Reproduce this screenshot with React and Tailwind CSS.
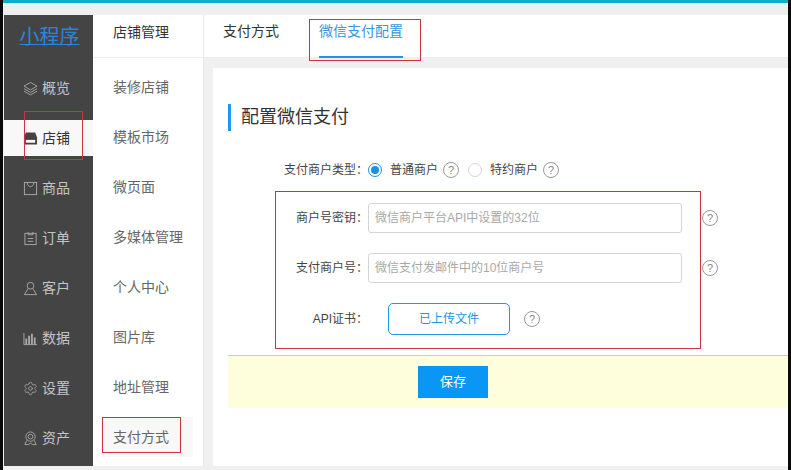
import { Settings } from "lucide-react";

const font = { fontFamily: '"Liberation Sans", "Noto Sans CJK SC", sans-serif' };

function Help() {
  return (
    <span className="flex h-4 w-4 shrink-0 items-center justify-center rounded-full border border-[#999] text-[11px] leading-none text-[#888]">
      ?
    </span>
  );
}

const icons = {
  layers: (
    <>
      <path d="M8 1.5 15 5.5 8 9.500 1 5.5Z" />
      <path d="M1 8.200 8 12.200 15 8.200" />
      <path d="M1 10.800 8 14.800 15 10.800" />
    </>
  ),
  store: (
    <>
      <path d="M3 1.500h10l2 5.500v7.500H1V7Z" fill="#444" stroke="none" />
      <rect x="3" y="9.500" width="10" height="3" fill="#f8f8f8" stroke="none" />
    </>
  ),
  bag: (
    <>
      <rect x="1.500" y="1.500" width="13" height="13" />
      <path d="M4.500 1.500c0 6 7 6 7 0" />
    </>
  ),
  order: (
    <>
      <rect x="2" y="2.500" width="12" height="12" />
      <path d="M5.500 1v3h5V1M5 8h6M5 11h6" />
    </>
  ),
  user: (
    <>
      <circle cx="8" cy="5" r="3.600" />
      <path d="M5.500 8 1.500 14.500h13L10.500 8" />
    </>
  ),
  chart: (
    <>
      <path d="M1 2v12.500h14" />
      <path d="M3.500 8v6M6.500 5v9M9.500 3v11M12.500 7v7" strokeWidth="2" />
    </>
  ),
  medal: (
    <>
      <circle cx="8" cy="6" r="5" />
      <circle cx="8" cy="6" r="2.500" />
      <path d="M4 10 2 14.500h3.500L8 13l2.500 1.500H14L12 10" />
    </>
  ),
};

function NavIcon({ name, active }) {
  if (name === "gear") {
    return <Settings size={15} strokeWidth={1.3} color="#a8a8a8" className="shrink-0" />;
  }
  return (
    <svg
      viewBox="0 0 16 16"
      fill="none"
      stroke={active ? "#444" : "#a8a8a8"}
      strokeWidth="1"
      className="h-[15px] w-[15px] shrink-0"
    >
      {icons[name]}
    </svg>
  );
}

const nav = [
  { label: "概览", icon: "layers" },
  { label: "店铺", icon: "store", active: true },
  { label: "商品", icon: "bag" },
  { label: "订单", icon: "order" },
  { label: "客户", icon: "user" },
  { label: "数据", icon: "chart" },
  { label: "设置", icon: "gear" },
  { label: "资产", icon: "medal" },
];

const subNav = ["装修店铺", "模板市场", "微页面", "多媒体管理", "个人中心", "图片库", "地址管理", "支付方式"];

function Sidebar() {
  return (
    <div className="flex w-[89px] shrink-0 flex-col bg-[#444444]">
      <div className="flex h-[43px] shrink-0 items-center justify-center pl-[2px] text-[20px] text-[#2a84dc]">
        <span className="underline decoration-1 underline-offset-0">小程序</span>
      </div>
      <div className="flex flex-col pt-[5px]">
        {nav.map((item) => (
          <div key={item.label} className="flex h-[50px] shrink-0 items-center">
            <div
              className={`flex h-9 w-full items-center gap-1 pl-[19px] text-[14px] ${item.active ? "bg-[#f8f8f8] text-[#333]" : "text-[#c4c4c4]"}`}
            >
              <NavIcon name={item.icon} active={item.active} />
              <span>{item.label}</span>
            </div>
          </div>
        ))}
      </div>
    </div>
  );
}

function SubNav() {
  return (
    <div className="flex w-[111px] shrink-0 flex-col border-r border-[#e8e8e8] bg-white">
      <div className="flex h-[43px] shrink-0 items-center border-b border-[#eeeeee] pb-2 pl-5 text-[14px] text-[#333]">店铺管理</div>
      <div className="flex flex-col pt-1">
        {subNav.map((item, i) => (
          <div key={item} className="flex h-[50px] shrink-0 items-center pl-2 pr-[10px]">
            <div className={`flex h-10 w-full items-center pl-3 text-[14px] text-[#666] ${i === 7 ? "bg-[#f8f8f8]" : ""}`}>
              {item}
            </div>
          </div>
        ))}
      </div>
    </div>
  );
}

function Field({ label, placeholder }) {
  return (
    <div className="flex items-center">
      <span className="w-[83px] shrink-0 text-right text-[12px] text-[#444]">{label}</span>
      <div className="flex h-[30px] w-[314px] shrink-0 items-center rounded-[3px] border border-[#d4d4d4] pl-[6px] text-[12px] text-[#a8a8a8]">
        {placeholder}
      </div>
    </div>
  );
}

export default function App() {
  return (
    <div style={font} className="relative flex h-[470px] w-[791px] overflow-hidden bg-[#f0f0f0]">
      <div className="w-[3px] shrink-0 bg-[#0a0a0a]" />
      <div className="flex min-w-0 flex-1 flex-col">
        <div className="h-[3px] shrink-0 bg-[#0eaec4]" />
        <div className="h-3 shrink-0 bg-[#eef0ef]" />
        <div className="flex min-h-0 flex-1 pb-1 pl-px">
          <Sidebar />
          <SubNav />
          <div className="flex min-w-0 flex-1 flex-col">
            <div className="flex h-[43px] shrink-0 gap-10 border-b border-[#eeeeee] bg-white pl-[19px] text-[14px] leading-none">
              <span className="pt-[9px] text-[#333]">支付方式</span>
              <div className="flex flex-col">
                <span className="pt-[9px] text-[#3a96dd]">微信支付配置</span>
                <div className="mt-auto mb-[-1px] h-[2px] bg-[#2196e3]" />
              </div>
            </div>
            <div className="ml-[9px] mt-[10px] flex min-h-0 flex-1 flex-col bg-white pl-[15px]">
              <div className="mt-9 flex h-[27px] shrink-0 items-center border-l-[3px] border-[#2196f3] pl-[10px] text-[18px] text-[#333]">
                配置微信支付
              </div>
              <div className="mt-[31px] flex h-4 shrink-0 items-center text-[12px] text-[#444]">
                <span className="ml-14">支付商户类型：</span>
                <span className="flex h-[14px] w-[14px] items-center justify-center rounded-full border border-[#1e90e8]">
                  <span className="h-2 w-2 rounded-full bg-[#1e90e8]" />
                </span>
                <span className="ml-2">普通商户</span>
                <span className="ml-[5px]"><Help /></span>
                <span className="ml-[9px] h-[14px] w-[14px] rounded-full border border-[#d4d4d4]" />
                <span className="ml-2">特约商户</span>
                <span className="ml-[5px]"><Help /></span>
              </div>
              <div className="mt-[25px] flex shrink-0 flex-col gap-5 pl-[57px]">
                <div className="flex items-center gap-5">
                  <Field label="商户号密钥：" placeholder="微信商户平台API中设置的32位" />
                  <Help />
                </div>
                <div className="flex items-center gap-5">
                  <Field label="支付商户号：" placeholder="微信支付发邮件中的10位商户号" />
                  <Help />
                </div>
                <div className="flex items-center">
                  <span className="w-[83px] shrink-0 text-right text-[12px] text-[#444]">API证书：</span>
                  <div className="ml-5 flex h-8 w-[122px] items-center justify-center rounded-[5px] border border-[#2196e3] text-[12px] text-[#2196e3]">
                    已上传文件
                  </div>
                  <span className="ml-[14px]"><Help /></span>
                </div>
              </div>
              <div className="mt-5 flex h-[53px] shrink-0 items-center border-t border-[#cccccc] bg-[#fefedd] pb-px pl-[190px]">
                <button className="h-8 w-[70px] bg-[#0a96f5] text-[13px] text-white">保存</button>
              </div>
            </div>
          </div>
        </div>
      </div>
      <div className="w-[3px] shrink-0 bg-[#0a0a0a]" />
      {/* red annotation boxes drawn over the screenshot */}
      <div className="absolute left-[24px] top-[111px] h-[49px] w-[59px] border border-[#cc3344]" />
      <div className="absolute left-[102px] top-[417px] h-[36px] w-[79px] border border-[#cc3344]" />
      <div className="absolute left-[309px] top-[19px] h-[42px] w-[112px] border border-[#cc3344]" />
      <div className="absolute left-[275px] top-[191px] h-[158px] w-[426px] border border-[#cc3344]" />
    </div>
  );
}
